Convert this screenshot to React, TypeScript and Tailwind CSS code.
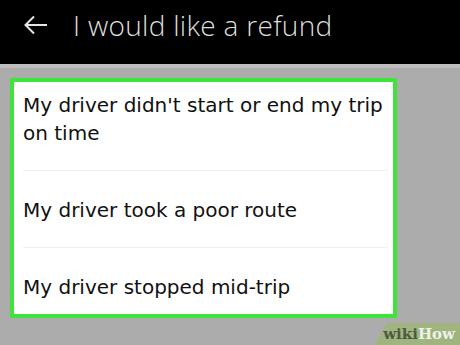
export default function App() {
  const reasons = [
    "My driver didn't start or end my trip on time",
    "My driver took a poor route",
    "My driver stopped mid-trip",
  ];
  const pad = ["pt-[9px] pb-[23px]", "pt-[25px] pb-[23px]", "pt-[25px] pb-[13px]"];

  return (
    <div className="relative flex h-[345px] w-[460px] flex-col overflow-hidden bg-[#acacac] font-['DejaVu_Sans',sans-serif]">
      <div className="flex h-[64px] items-center bg-black pl-[24px]">
        <svg width="24" height="20" viewBox="0 0 24 20" className="mt-[-14px]" fill="none" stroke="#e6e6e6" strokeWidth="2">
          <path d="M23 10H2M10 1.5L1.5 10l8.5 8.5" />
        </svg>
        <span className="ml-[25px] mt-[-14px] font-['Open_Sans',sans-serif] text-[28px] font-light tracking-[0.3px] text-[#dedede]">
          I would like a refund
        </span>
      </div>
      <div className="h-[4px] bg-[#bebebe]" />
      <div className="px-[10px] pt-[10px]">
        <div className="w-[387px] border-[4px] border-[#3ee43a] bg-white pl-[9px] pr-[6px]">
          {reasons.map((r, i) => (
            <div
              key={r}
              className={`${i < reasons.length - 1 ? "border-b border-[#f0f0f0]" : ""} ${pad[i]} text-[20px] leading-[28px] text-[#111]`}
            >
              {r}
            </div>
          ))}
        </div>
      </div>
      <div className="absolute bottom-0 right-0 flex h-[22px] w-[85px] items-center justify-end bg-[#9fb47e] pr-[5px] [clip-path:polygon(12px_0,100%_0,100%_100%,0_100%)]">
        <span className="font-['DejaVu_Serif',serif] text-[15px] font-bold leading-none">
          <span className="text-[#4f5a44]">wiki</span>
          <span className="text-[#eef0ea]">How</span>
        </span>
      </div>
    </div>
  );
}
